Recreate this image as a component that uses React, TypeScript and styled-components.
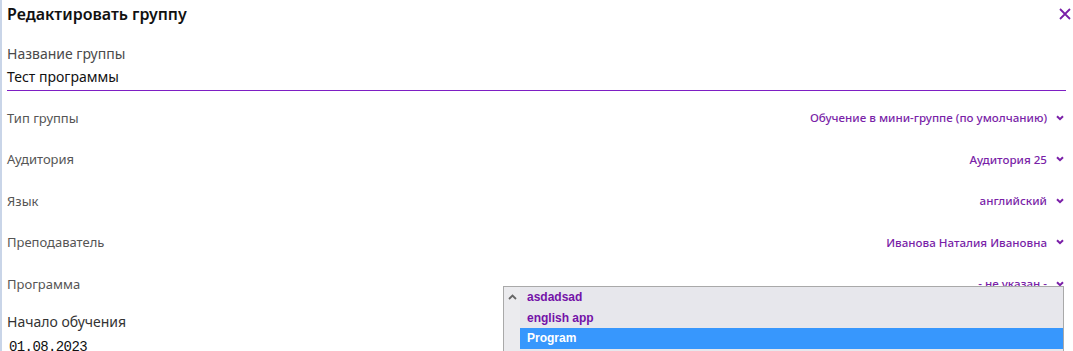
import React from "react";
import styled, { createGlobalStyle } from "styled-components";

const GlobalStyle = createGlobalStyle`
  html, body {
    margin: 0;
    padding: 0;
    background: #ffffff;
    overflow: hidden;
  }
  body {
    font-family: "Noto Sans", "Open Sans", sans-serif;
  }
`;

const Panel = styled.div`
  width: 1073px;
  height: 351px;
  box-sizing: border-box;
  border-left: 2px solid #c9d5e8;
  padding: 0 1px 0 5px;
  overflow: hidden;
`;

const Header = styled.div`
  display: flex;
  align-items: center;
  justify-content: space-between;
  height: 28px;
`;

const Title = styled.h1`
  margin: 0;
  font-size: 16px;
  font-weight: 600;
  color: #111111;
`;

const CloseButton = styled.button`
  display: flex;
  align-items: center;
  justify-content: center;
  width: 14px;
  height: 14px;
  padding: 0;
  border: none;
  background: none;
  cursor: pointer;
`;

const NameField = styled.div`
  display: flex;
  flex-direction: column;
  margin-top: 15px;
  margin-right: 6px;
  border-bottom: 1px solid #7e1fc4;
`;

const FieldLabel = styled.label<{ $dark?: boolean }>`
  font-size: 14px;
  line-height: 22px;
  color: ${(p) => (p.$dark ? "#333333" : "#4a4a4a")};
`;

const NameInput = styled.div`
  font-size: 14px;
  line-height: 24px;
  color: #111111;
  padding-bottom: 1px;
`;

const SelectList = styled.div`
  display: flex;
  flex-direction: column;
  margin-top: 6px;
  margin-right: 6px;
`;

const SelectRow = styled.div`
  position: relative;
  display: flex;
  align-items: center;
  justify-content: space-between;
  height: 41.5px;
`;

const RowLabel = styled.span`
  font-size: 13px;
  color: #555555;
`;

const RowValue = styled.div`
  display: flex;
  align-items: center;
  gap: 9px;
  font-size: 11.6px;
  font-weight: 500;
  color: #7a1fa8;
  cursor: pointer;
`;

const Chevron = styled.svg`
  width: 8px;
  height: 6px;
  margin-right: 2px;
`;

const Popup = styled.div`
  position: absolute;
  top: 23px;
  right: 2px;
  width: 561px;
  height: 80px;
  box-sizing: border-box;
  display: flex;
  background: #e7e7ec;
  border: 1px solid #a9a9a9;
  border-bottom: none;
  z-index: 2;
`;

const ScrollGutter = styled.div`
  width: 16px;
  display: flex;
  justify-content: center;
  padding-top: 7px;
  background: #ebebee;
`;

const Options = styled.div`
  flex: 1;
  display: flex;
  flex-direction: column;
`;

const Option = styled.div<{ $active?: boolean }>`
  height: 20.5px;
  flex-shrink: 0;
  display: flex;
  align-items: center;
  padding-left: 7px;
  font-family: "Liberation Sans", Arial, sans-serif;
  font-size: 12px;
  font-weight: 700;
  color: ${(p) => (p.$active ? "#ffffff" : "#7412a8")};
  background: ${(p) => (p.$active ? "#3797fd" : "transparent")};
`;

const StartField = styled.div`
  display: flex;
  flex-direction: column;
  margin-top: 6px;
`;

const DateValue = styled.div`
  font-family: "Liberation Mono", monospace;
  font-size: 14px;
  line-height: 22px;
  color: #111111;
  padding-left: 2px;
  margin-top: 3px;
  letter-spacing: -0.6px;
`;

const ChevronDown = () => (
  <Chevron viewBox="0 0 8 6">
    <path d="M1 1.2 L4 4.2 L7 1.2" fill="none" stroke="#7a1fa8" strokeWidth="2" />
  </Chevron>
);

const rows = [
  { label: "Тип группы", value: "Обучение в мини-группе (по умолчанию)" },
  { label: "Аудитория", value: "Аудитория 25" },
  { label: "Язык", value: "английский" },
  { label: "Преподаватель", value: "Иванова Наталия Ивановна" },
];

const programs = ["asdadsad", "english app", "Program", ""];

const App = () => {
  return (
    <>
      <GlobalStyle />
      <Panel>
        <Header>
          <Title>Редактировать группу</Title>
          <CloseButton aria-label="Закрыть">
            <svg width="12" height="12" viewBox="0 0 12 12">
              <path d="M1 1 L11 11 M11 1 L1 11" stroke="#7a1fa8" strokeWidth="1.8" />
            </svg>
          </CloseButton>
        </Header>
        <NameField>
          <FieldLabel>Название группы</FieldLabel>
          <NameInput>Тест программы</NameInput>
        </NameField>
        <SelectList>
          {rows.map((r) => (
            <SelectRow key={r.label}>
              <RowLabel>{r.label}</RowLabel>
              <RowValue>
                {r.value}
                <ChevronDown />
              </RowValue>
            </SelectRow>
          ))}
          <SelectRow>
            <RowLabel>Программа</RowLabel>
            <RowValue>
              - не указан -
              <ChevronDown />
            </RowValue>
            <Popup>
              <ScrollGutter>
                <svg width="9" height="6" viewBox="0 0 9 6">
                  <path d="M1 5 L4.5 1.5 L8 5" fill="none" stroke="#666" strokeWidth="1.8" />
                </svg>
              </ScrollGutter>
              <Options>
                {programs.map((p, i) => (
                  <Option key={i} $active={p === "Program"}>
                    {p}
                  </Option>
                ))}
              </Options>
            </Popup>
          </SelectRow>
        </SelectList>
        <StartField>
          <FieldLabel $dark>Начало обучения</FieldLabel>
          <DateValue>01.08.2023</DateValue>
        </StartField>
      </Panel>
    </>
  );
};

export default App;
